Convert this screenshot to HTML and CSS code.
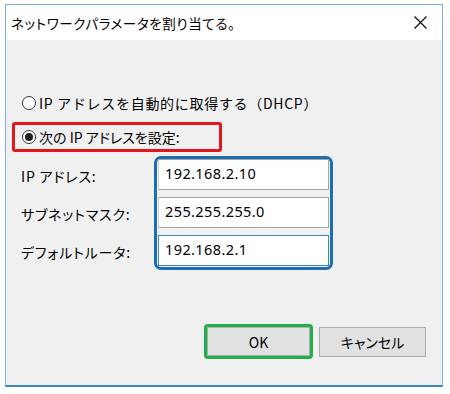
FILE: index.html
```html
<!DOCTYPE html>
<html lang="ja">
<head>
    <meta charset="UTF-8">
    <title>ネットワークパラメータを割り当てる。</title>
    <link rel="stylesheet" href="styles.css">
</head>
<body>
    <div class="window">
        <div class="titlebar">
            <span class="title">ネットワークパラメータを割り当てる。</span>
            <svg class="close" width="13" height="13" viewBox="0 0 13 13">
                <path d="M0.5 0.5 L12.5 12.5 M12.5 0.5 L0.5 12.5" stroke="#111" stroke-width="1.3" fill="none"/>
            </svg>
        </div>
        <div class="content">
            <label class="radio-row">
                <span class="radio"></span>
                <span class="wide">IP アドレスを自動的に取得する（DHCP）</span>
            </label>
            <div class="mark-red">
                <label class="radio-row">
                    <span class="radio checked"></span>
                    <span>次の IP アドレスを設定:</span>
                </label>
            </div>
            <div class="fields">
                <div class="labels">
                    <span>IP アドレス:</span>
                    <span>サブネットマスク:</span>
                    <span>デフォルトルータ:</span>
                </div>
                <div class="mark-blue">
                    <div class="input">192.168.2.10</div>
                    <div class="input">255.255.255.0</div>
                    <div class="input focus">192.168.2.1</div>
                </div>
            </div>
            <div class="buttons">
                <div class="mark-green">
                    <button class="button">OK</button>
                </div>
                <button class="button">キャンセル</button>
            </div>
        </div>
    </div>
</body>
</html>
```

FILE: styles.css
```css
* {
    box-sizing: border-box;
}
body {
    margin: 0;
    background: #fff;
    font-family: "Noto Sans CJK JP", "Noto Sans", sans-serif;
    font-feature-settings: "palt";
    color: #000;
}
.window {
    margin: 4px 0 0 5px;
    width: 438px;
    height: 383px;
    border: 1px solid #7eb0dc;
    border-bottom: 2px solid #3f84c1;
    display: flex;
    flex-direction: column;
}
.titlebar {
    height: 35px;
    background: #fff;
    display: flex;
    align-items: center;
    justify-content: space-between;
    padding: 0 15px 0 5px;
}
.title {
    font-size: 13.5px;
    letter-spacing: 0.6px;
}
.content {
    flex: 1;
    background: #f0f0f0;
    padding: 55px 0 0 0;
    font-size: 14px;
}
.radio-row {
    display: flex;
    align-items: center;
    height: 16px;
    margin-left: 16px;
    gap: 3px;
}
.wide {
    font-feature-settings: normal;
    letter-spacing: 0.7px;
}
.radio {
    width: 14px;
    height: 14px;
    border: 1px solid #333;
    border-radius: 50%;
    background: #fff;
    display: flex;
    align-items: center;
    justify-content: center;
}
.radio.checked::after {
    content: "";
    width: 8px;
    height: 8px;
    border-radius: 50%;
    background: #222;
}
.mark-red {
    margin: 11px 0 0 6px;
    width: 210px;
    height: 30px;
    border: 3px solid #e3161d;
    border-radius: 3px;
    display: flex;
    align-items: center;
}
.mark-red .radio-row {
    margin-left: 7px;
}
.fields {
    display: flex;
    margin-top: 4px;
}
.labels {
    width: 148px;
    padding: 12px 0 0 15px;
    display: flex;
    flex-direction: column;
    gap: 21px;
    letter-spacing: 0.8px;
}
.labels span {
    height: 17px;
    line-height: 17px;
}
.mark-blue {
    width: 179px;
    border: 3px solid #1c6db3;
    border-radius: 7px;
    display: flex;
    flex-direction: column;
    gap: 7px;
    padding: 0 1px 1px 1px;
}
.input {
    height: 31px;
    background: #fff;
    border: 1px solid #a5a5a5;
    border-left-color: #d0d0d0;
    padding: 0 0 0 6px;
    line-height: 27px;
    font-family: "Noto Sans", sans-serif;
    font-size: 14.5px;
    letter-spacing: 0.4px;
}
.input.focus {
    border-color: #3c86c6;
}
.buttons {
    display: flex;
    justify-content: flex-end;
    align-items: center;
    gap: 6px;
    margin-top: 54px;
    padding-right: 16px;
}
.mark-green {
    border: 3px solid #1fb04b;
    border-radius: 4px;
    display: flex;
}
.button {
    width: 107px;
    height: 30px;
    background: #e1e1e1;
    border: 1px solid #adadad;
    font-family: "Noto Sans CJK JP", "Noto Sans", sans-serif;
    font-feature-settings: "palt";
    font-size: 14px;
    color: #000;
    padding: 0;
}
.mark-green .button {
    width: 103px;
    height: 29px;
}
```
